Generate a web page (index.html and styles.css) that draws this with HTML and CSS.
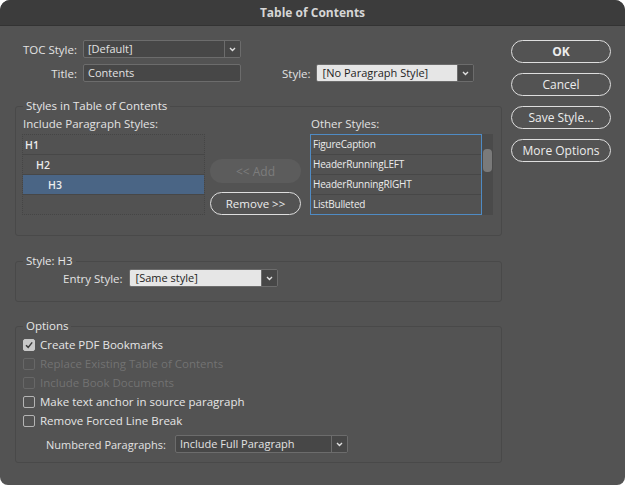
FILE: index.html
```html
<!DOCTYPE html>
<html>
<head>
<meta charset="utf-8">
<link rel="stylesheet" href="styles.css">
</head>
<body>
<div class="window">
  <div class="titlebar">Table of Contents</div>
  <div class="content">
    <div class="left">
      <div class="row">
        <span class="lbl">TOC Style:</span>
        <div class="select dark w158"><span class="val">[Default]</span><span class="chev"><svg width="7" height="5" viewBox="0 0 7 5"><polyline points="1,1 3.5,3.5 6,1" fill="none" stroke="#e0e0e0" stroke-width="1.4"/></svg></span></div>
      </div>
      <div class="row r2">
        <span class="lbl">Title:</span>
        <div class="input w158">Contents</div>
        <span class="lbl2">Style:</span>
        <div class="select light w158"><span class="val">[No Paragraph Style]</span><span class="chev"><svg width="7" height="5" viewBox="0 0 7 5"><polyline points="1,1 3.5,3.5 6,1" fill="none" stroke="#e0e0e0" stroke-width="1.4"/></svg></span></div>
      </div>

      <fieldset class="group g1">
        <legend>Styles in Table of Contents</legend>
        <div class="g1-inner">
          <div class="col incl">
            <div class="cap">Include Paragraph Styles:</div>
            <div class="list inlist">
              <div class="item l1">H1</div>
              <div class="item l2">H2</div>
              <div class="item l3 sel">H3</div>
              <div class="item empty"></div>
            </div>
          </div>
          <div class="col mid">
            <div class="btn disabled">&lt;&lt; Add</div>
            <div class="btn pill">Remove &gt;&gt;</div>
          </div>
          <div class="col other">
            <div class="cap">Other Styles:</div>
            <div class="olist-wrap">
              <div class="list olist">
                <div class="oitem">FigureCaption</div>
                <div class="oitem">HeaderRunningLEFT</div>
                <div class="oitem">HeaderRunningRIGHT</div>
                <div class="oitem">ListBulleted</div>
              </div>
              <div class="scroll"><div class="thumb"></div></div>
            </div>
          </div>
        </div>
      </fieldset>

      <fieldset class="group g2">
        <legend>Style: H3</legend>
        <div class="g2-inner">
          <span class="lbl3">Entry Style:</span>
          <div class="select light w149"><span class="val">[Same style]</span><span class="chev"><svg width="7" height="5" viewBox="0 0 7 5"><polyline points="1,1 3.5,3.5 6,1" fill="none" stroke="#e0e0e0" stroke-width="1.4"/></svg></span></div>
        </div>
      </fieldset>

      <fieldset class="group g3">
        <legend>Options</legend>
        <div class="g3-inner">
          <div class="cb"><span class="box checked"><svg width="10" height="10" viewBox="0 0 10 10"><polyline points="2,5.2 4.2,7.4 8.2,2.4" fill="none" stroke="#3c3c3c" stroke-width="1.5"/></svg></span>Create PDF Bookmarks</div>
          <div class="cb dis"><span class="box"></span>Replace Existing Table of Contents</div>
          <div class="cb dis"><span class="box"></span>Include Book Documents</div>
          <div class="cb"><span class="box"></span>Make text anchor in source paragraph</div>
          <div class="cb"><span class="box"></span>Remove Forced Line Break</div>
          <div class="numrow">
            <span class="lbl4">Numbered Paragraphs:</span>
            <div class="select dark w173"><span class="val">Include Full Paragraph</span><span class="chev"><svg width="7" height="5" viewBox="0 0 7 5"><polyline points="1,1 3.5,3.5 6,1" fill="none" stroke="#e0e0e0" stroke-width="1.4"/></svg></span></div>
          </div>
        </div>
      </fieldset>
    </div>
    <div class="right">
      <div class="btn pill big bold">OK</div>
      <div class="btn pill big">Cancel</div>
      <div class="btn pill big">Save Style...</div>
      <div class="btn pill big">More Options</div>
    </div>
  </div>
</div>
</body>
</html>
```
FILE: styles.css
```css
html, body {
  margin: 0;
  padding: 0;
  background: #ffffff;
}
body {
  font-family: "Open Sans", "Noto Sans", sans-serif;
  font-size: 11px;
  color: #e2e2e2;
}
.window {
  width: 625px;
  height: 485px;
  background: #535353;
  border-radius: 10px 10px 8px 8px;
  overflow: hidden;
}
.titlebar {
  height: 26px;
  line-height: 26px;
  background: #3c3c3c;
  text-align: center;
  font-weight: bold;
  font-size: 12px;
  color: #d6d6d6;
  border-bottom: 1px solid #333;
  box-sizing: border-box;
}
.content {
  display: flex;
  padding: 14px 0 0 15px;
  gap: 9px;
}
.left {
  width: 487px;
}
.right {
  width: 100px;
  display: flex;
  flex-direction: column;
  gap: 10px;
}
.row {
  display: flex;
  align-items: center;
  height: 18px;
}
.r2 {
  margin-top: 6px;
}
.lbl {
  width: 62px;
  text-align: right;
  margin-right: 6px;
  font-size: 11.5px;
}
.lbl2 {
  margin-left: 41px;
  margin-right: 5px;
  font-size: 11.5px;
}
.w158 { width: 158px; }
.w149 { width: 149px; }
.w173 { width: 173px; }
.select {
  display: flex;
  height: 18px;
  border: 1px solid #6c6c6c;
  border-radius: 2px;
  box-sizing: border-box;
  background: #474747;
  overflow: hidden;
}
.select .val {
  flex: 1;
  padding-left: 4px;
  line-height: 16px;
  white-space: nowrap;
}
.select.light .val {
  background: #e6e6e6;
  color: #1e1e1e;
  padding-left: 6px;
}
.select .chev {
  width: 15px;
  border-left: 1px solid #6c6c6c;
  background: #474747;
  display: flex;
  align-items: center;
  justify-content: center;
}
.input {
  height: 18px;
  box-sizing: border-box;
  border: 1px solid #6c6c6c;
  border-radius: 2px;
  background: #474747;
  line-height: 16px;
  padding-left: 4px;
}
.group {
  margin: 0;
  padding: 0;
  border: 1px solid #494949;
  border-radius: 3px;
  min-width: 0;
  width: 487px;
  box-sizing: border-box;
}
.group legend {
  padding: 0 3px;
  margin-left: 7px;
  line-height: 14px;
  font-size: 11.5px;
  color: #e6e6e6;
}
.g1 { margin-top: 17px; }
.g1-inner {
  display: flex;
  padding: 4px 0 20px 6px;
}
.col {
  display: flex;
  flex-direction: column;
}
.cap {
  line-height: 14px;
  margin-bottom: 3px;
  padding-left: 1px;
  font-size: 11.5px;
}
.incl { width: 183px; }
.list {
  height: 81px;
  box-sizing: border-box;
}
.inlist {
  border: 1px dotted #454545;
  background: #525252;
}
.item {
  height: 20px;
  line-height: 20px;
  border-bottom: 1px solid #474747;
  box-sizing: border-box;
  font-weight: 600;
  font-size: 10.5px;
  color: #ececec;
}
.item.empty { border-bottom: none; }
.l1 { padding-left: 2px; }
.l2 { padding-left: 13px; }
.l3 { padding-left: 25px; }
.item.sel { background: #4a6585; }
.mid {
  width: 91px;
  margin-left: 5px;
  justify-content: flex-end;
  gap: 9px;
}
.btn {
  height: 23px;
  box-sizing: border-box;
  border-radius: 12px;
  display: flex;
  align-items: center;
  justify-content: center;
  font-size: 11.5px;
}
.btn.disabled {
  background: #5c5c5c;
  color: #7c7c7c;
  height: 24px;
  font-size: 12px;
}
.btn.pill {
  border: 1.5px solid #dedede;
  color: #ececec;
  font-weight: 500;
}
.btn.big {
  height: 23px;
  font-size: 12px;
}
.btn.bold { font-weight: bold; }
.other {
  margin-left: 9px;
}
.olist-wrap {
  display: flex;
  height: 81px;
}
.olist {
  width: 172px;
  border: 1px solid #4f8bc4;
  background: #525252;
}
.oitem {
  height: 20px;
  line-height: 19px;
  border-bottom: 1px solid #474747;
  box-sizing: border-box;
  font-size: 10px;
  padding-left: 2px;
  color: #ececec;
  letter-spacing: -0.2px;
}
.oitem:last-child { border-bottom: none; }
.scroll {
  width: 11px;
  background: #4a4a4a;
  padding-top: 15px;
  box-sizing: border-box;
}
.thumb {
  width: 9px;
  height: 23px;
  margin-left: 1px;
  border-radius: 4px;
  background: #7a7a7a;
}
.g2 { margin-top: 18px; }
.g2-inner {
  display: flex;
  align-items: center;
  padding: 1px 0 14px 47px;
}
.lbl3 {
  margin-right: 6px;
  font-size: 11.5px;
}
.g3 { margin-top: 17px; }
.g3-inner {
  padding: 2px 0 9px 7px;
}
.cb {
  display: flex;
  align-items: center;
  height: 19px;
  font-size: 11.5px;
  color: #e6e6e6;
}
.cb.dis { color: #727272; }
.box {
  width: 12px;
  height: 12px;
  box-sizing: border-box;
  border: 1px solid #b4b4b4;
  border-radius: 2px;
  margin-right: 5px;
  display: flex;
  align-items: center;
  justify-content: center;
}
.cb.dis .box { border-color: #676767; }
.box.checked {
  background: #c8c8c8;
  border-color: #c8c8c8;
}
.numrow {
  display: flex;
  align-items: center;
  margin-top: 5px;
  padding-left: 23px;
}
.lbl4 {
  margin-right: 9px;
  font-size: 11px;
}
```
